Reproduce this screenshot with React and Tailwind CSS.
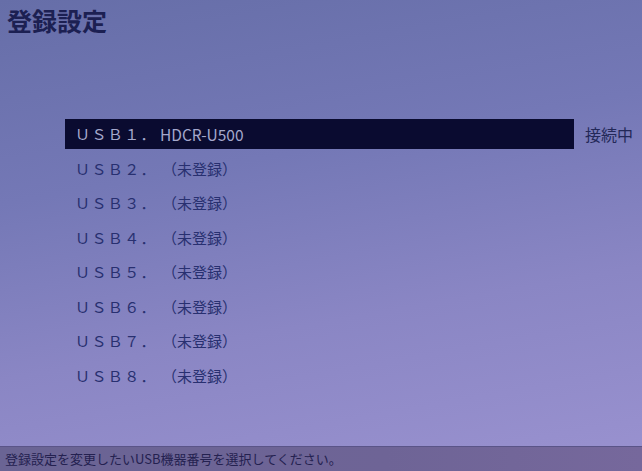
import React from "react";

const devices = [
  { no: "１", name: "HDCR-U500", active: true },
  { no: "２", name: "（未登録）" },
  { no: "３", name: "（未登録）" },
  { no: "４", name: "（未登録）" },
  { no: "５", name: "（未登録）" },
  { no: "６", name: "（未登録）" },
  { no: "７", name: "（未登録）" },
  { no: "８", name: "（未登録）" },
];

const jp = { fontFamily: '"Noto Sans CJK JP", "Noto Sans", sans-serif' };

export default function App() {
  return (
    <div
      className="w-[642px] h-[471px] flex flex-col overflow-hidden bg-[linear-gradient(170deg,#666ea8_0%,#7478b6_35%,#8a86c4_65%,#9a92d0_100%)]"
      style={jp}
    >
      {/* header */}
      <h1 className="pl-[7px] pt-[4px] text-[25px] leading-[32px] font-bold text-[#1c2052]">
        登録設定
      </h1>

      {/* usb list */}
      <div className="mt-[81px] flex flex-col">
        {devices.map((d) => (
          <div key={d.no} className="h-[34.5px] flex items-center">
            <div
              className={
                "ml-[65px] w-[509px] h-[30px] flex items-center pl-[10px] text-[15px] " +
                (d.active ? "bg-[#0a0b30] text-[#a4a8cc]" : "text-[#283070]")
              }
            >
              <span className="w-[87px] tracking-[1.4px]">ＵＳＢ{d.no}．</span>
              <span className={d.active ? "-ml-[2px] text-[15.5px]" : ""}>{d.name}</span>
            </div>
            {d.active && (
              <span className="ml-[11px] text-[16px] text-[#232858]">接続中</span>
            )}
          </div>
        ))}
      </div>

      {/* help bar */}
      <div className="mt-auto h-[25px] border-t border-[#5a5488] bg-[linear-gradient(90deg,#6a6494,#6e6496_60%,#76689c)] flex items-center pl-[5px] text-[13px] text-[#242150]">
        登録設定を変更したいUSB機器番号を選択してください。
      </div>
    </div>
  );
}
